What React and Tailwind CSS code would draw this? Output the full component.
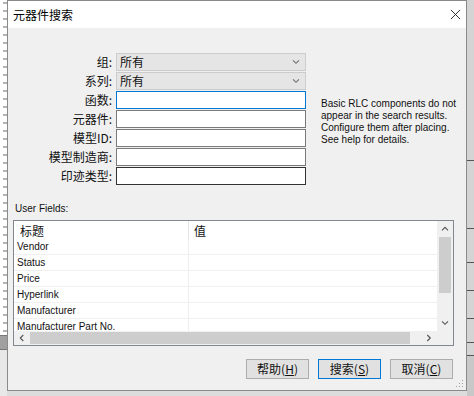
const cjk = { fontFamily: '"Microsoft YaHei", "Noto Sans CJK SC", sans-serif' };
const latin = { fontFamily: '"Liberation Sans", "Noto Sans CJK SC", sans-serif' };

const fields = [
  { label: '组:', kind: 'combo', value: '所有' },
  { label: '系列:', kind: 'combo', value: '所有' },
  { label: '函数:', kind: 'focus' },
  { label: '元器件:', kind: 'input' },
  { label: '模型ID:', kind: 'input' },
  { label: '模型制造商:', kind: 'input' },
  { label: '印迹类型:', kind: 'dark' },
];

const rows = ['Vendor', 'Status', 'Price', 'Hyperlink', 'Manufacturer', 'Manufacturer Part No.'];

function Chevron({ dir = 'down', className = '' }) {
  const d = {
    down: 'M1 1.5 L4.5 5 L8 1.5',
    up: 'M1 5 L4.5 1.5 L8 5',
    left: 'M5 1 L1.5 4.5 L5 8',
    right: 'M1.5 1 L5 4.5 L1.5 8',
  }[dir];
  const box = dir === 'left' || dir === 'right' ? '0 0 7 9' : '0 0 9 7';
  return (
    <svg viewBox={box} className={className} fill="none" stroke="currentColor" strokeWidth="1.3">
      <path d={d} />
    </svg>
  );
}

function Field({ kind, value }) {
  if (kind === 'combo') {
    return (
      <div className="flex h-[18px] w-[190px] items-center justify-between border border-[#cccccc] bg-[#e5e5e5] pl-[3px] pr-[5px] text-[12px] text-[#111]" style={cjk}>
        <span className="leading-none">{value}</span>
        <Chevron className="h-[6px] w-[8px] text-[#707070]" />
      </div>
    );
  }
  const border =
    kind === 'focus' ? 'border-[#0078d7]' : kind === 'dark' ? 'border-[#333333]' : 'border-[#7a7a7a]';
  return <div className={`h-[18px] w-[190px] border bg-white ${border}`} />;
}

function Button({ children, primary }) {
  return (
    <div
      className={`flex h-[20px] w-[63px] items-center justify-center border bg-[#e1e1e1] text-[12px] text-[#111] ${
        primary ? 'border-[#0078d7]' : 'border-[#adadad]'
      }`}
      style={cjk}
    >
      {children}
    </div>
  );
}

export default function App() {
  return (
    <div className="flex h-[396px] w-[474px] overflow-hidden bg-[#d9d9d9]">
      <div className="flex w-[7px] flex-col">
        <div className="h-[335px] bg-white bg-[repeating-linear-gradient(to_bottom,transparent_0px,transparent_7px,#6b6b6b_7px,#6b6b6b_8px)] bg-[length:4px_8px] bg-right bg-repeat-y" />
        <div className="h-[15px] border-y border-[#777] bg-[#a0a0a0]" />
        <div className="flex-1 bg-[#e8e8e8]" />
      </div>

      <div className="flex w-[460px] flex-col">
        <div className="flex h-[391px] flex-col border border-[#8a8a8a] bg-[#f0f0f0]">
          <div className="flex h-[27px] items-center justify-between bg-white pl-[5px] pr-[5px]">
            <span className="text-[12px] text-black" style={cjk}>元器件搜索</span>
            <svg viewBox="0 0 12 12" className="h-[11px] w-[11px]" stroke="#222" strokeWidth="1">
              <path d="M1 1 L11 11 M11 1 L1 11" />
            </svg>
          </div>

          <div className="flex flex-1 flex-col">
            <div className="flex pt-[25px]">
              <div className="flex flex-col gap-px">
                {fields.map((f) => (
                  <div key={f.label} className="flex h-[18px] items-center gap-[4px]">
                    <span className="w-[104px] text-right text-[12px] leading-none text-[#111]" style={cjk}>
                      {f.label}
                    </span>
                    <Field kind={f.kind} value={f.value} />
                  </div>
                ))}
              </div>
              <div className="ml-[15px] mt-[45px] whitespace-nowrap text-[10px] leading-[12px] text-[#111]" style={latin}>
                <div>Basic RLC components do not</div>
                <div>appear in the search results.</div>
                <div>Configure them after placing.</div>
                <div>See help for details.</div>
              </div>
            </div>

            <div className="mt-[17px] pl-[7px] text-[10px] leading-[14px] text-[#111]" style={latin}>
              User Fields:
            </div>

            <div className="ml-[5px] mt-[4px] flex h-[126px] w-[441px] flex-col border border-[#828790] bg-white">
              <div className="flex min-h-0 flex-1">
                <div className="flex-1 overflow-hidden">
                  <div className="flex h-[18px] items-center text-[12px] text-[#111]" style={cjk}>
                    <div className="h-full w-[175px] border-r border-[#e5e5e5] pl-[6px] pt-[1px]">标题</div>
                    <div className="h-full pl-[5px] pt-[1px]">值</div>
                  </div>
                  {rows.map((r) => (
                    <div key={r} className="flex h-[16px] border-b border-[#f0f0f0] text-[10px] text-[#111]" style={latin}>
                      <div className="flex w-[175px] items-center whitespace-nowrap border-r border-[#eeeeee] pb-[1px] pl-[3px]">{r}</div>
                      <div className="flex-1" />
                    </div>
                  ))}
                </div>
                <div className="flex w-[16px] flex-col items-center bg-[#f0f0f0]">
                  <div className="flex h-[16px] items-center justify-center">
                    <Chevron dir="up" className="h-[6px] w-[8px] text-[#555]" />
                  </div>
                  <div className="h-[56px] w-[12px] bg-[#cdcdcd]" />
                  <div className="flex-1" />
                  <div className="flex h-[16px] items-center justify-center">
                    <Chevron dir="down" className="h-[6px] w-[8px] text-[#555]" />
                  </div>
                </div>
              </div>
              <div className="flex h-[14px] bg-[#f0f0f0]">
                <div className="flex w-[16px] items-center justify-center">
                  <Chevron dir="left" className="h-[8px] w-[6px] text-[#555]" />
                </div>
                <div className="my-[1px] w-[380px] bg-[#cdcdcd]" />
                <div className="flex-1" />
                <div className="flex w-[16px] items-center justify-center">
                  <Chevron dir="right" className="h-[8px] w-[6px] text-[#555]" />
                </div>
                <div className="w-[16px]" />
              </div>
            </div>

            <div className="mt-[13px] flex justify-end gap-[9px] pr-[13px]">
              <Button>帮助(<u>H</u>)</Button>
              <Button primary>搜索(<u>S</u>)</Button>
              <Button>取消(<u>C</u>)</Button>
            </div>
          </div>
          <div className="flex h-[6px] justify-end pr-[2px]">
            <svg viewBox="0 0 8 8" className="h-[8px] w-[8px] -translate-y-[4px]" fill="#a0a0a0">
              <rect x="6" y="0" width="1" height="1" />
              <rect x="3" y="3" width="1" height="1" />
              <rect x="6" y="3" width="1" height="1" />
              <rect x="0" y="6" width="1" height="1" />
              <rect x="3" y="6" width="1" height="1" />
              <rect x="6" y="6" width="1" height="1" />
            </svg>
          </div>
        </div>
        <div className="flex-1 bg-[#dcdcdc]" />
      </div>

      <div className="flex w-[7px] flex-col bg-[#d4d4d4]">
        <div className="h-[160px]" />
        <div className="h-px bg-[#555]" />
        <div className="h-[67px]" />
        <div className="h-px bg-[#555]" />
        <div className="h-[33px]" />
        <div className="h-px bg-[#555]" />
        <div className="h-[27px]" />
        <div className="h-px bg-[#555]" />
        <div className="h-[27px]" />
        <div className="h-px bg-[#555]" />
        <div className="h-[23px]" />
        <div className="h-px bg-[#555]" />
        <div className="h-[12px]" />
        <div className="h-px bg-[#555]" />
        <div className="flex-1 bg-[#c8c8c8]" />
      </div>
    </div>
  );
}
